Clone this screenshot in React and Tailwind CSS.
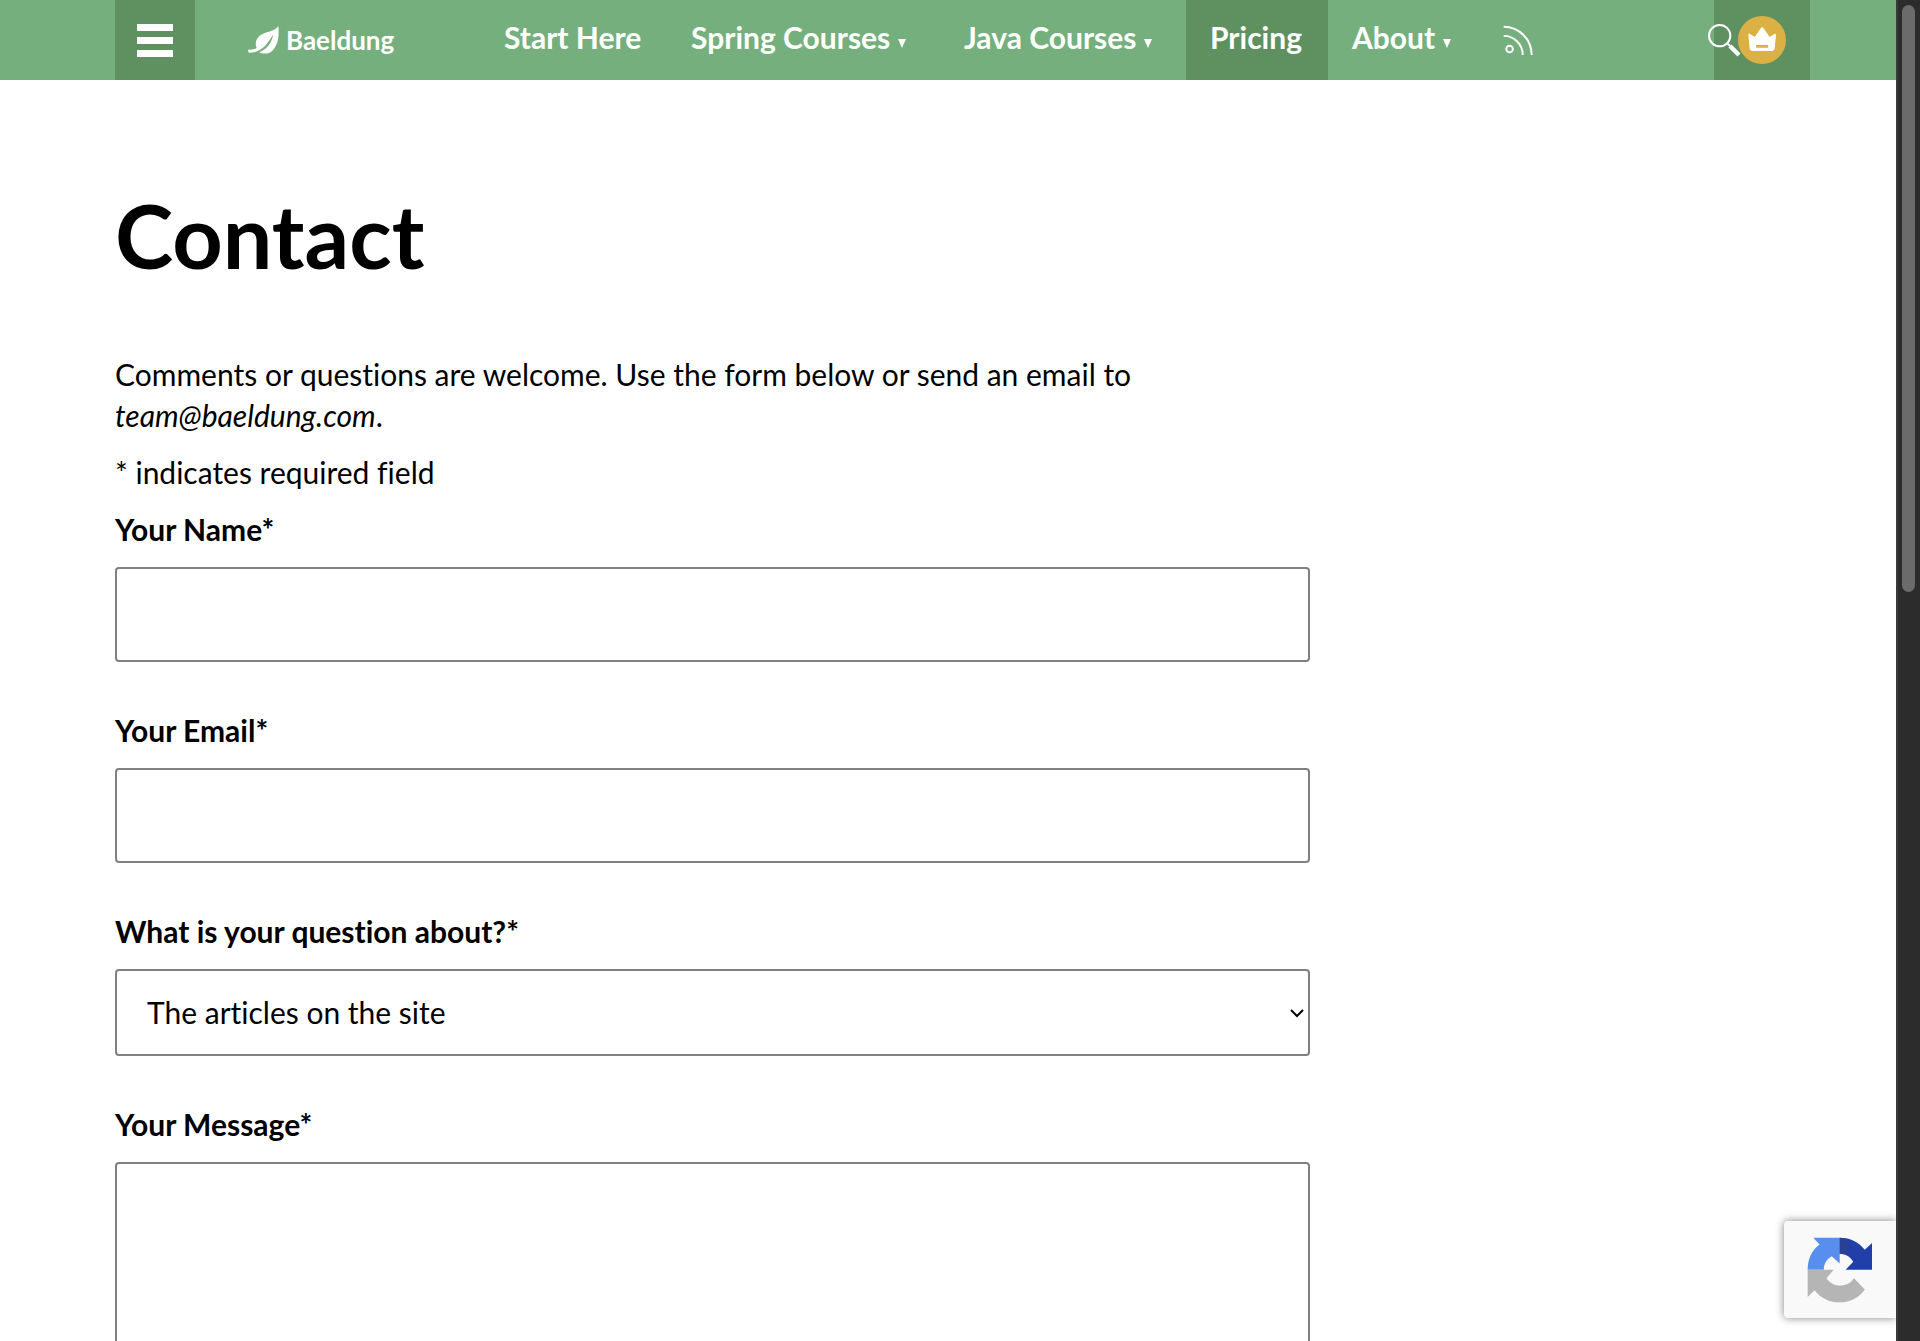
const NAV = [
  { label: "Start Here", width: "w-[187px]" },
  { label: "Spring Courses", width: "w-[273px]", menu: true },
  { label: "Java Courses", width: "w-[246px]", menu: true },
  { label: "Pricing", width: "w-[142px]", active: true },
  { label: "About", width: "w-[151px]", menu: true },
];

const TOPICS = ["The articles on the site", "The courses", "Something else"];

const fieldClass = "block w-full rounded-[4px] border-2 border-[#808080] bg-white px-[30px] text-black";

function Leaf() {
  return (
    <svg viewBox="444 79 94 84" className="h-[28px] w-[31px]" fill="#fff" aria-hidden="true">
      <path d="M536 79C522 96 502 94 485 104C468 114 464 130 470 145C464 149 456 151 446 150Q442 154 447 160C461 160 473 156 483 149C499 139 508 123 521 104C516 127 503 149 478 158C489 163 507 164 517 154C535 137 539 112 536 79Z"/>
    </svg>
  );
}

function Logo() {
  return (
    <a href="#home" className="ml-[53px] flex w-[232px] items-center gap-[7px] text-white">
      <Leaf/>
      <span className="text-[26px] leading-[30px] font-bold">Baeldung</span>
    </a>
  );
}

function RssIcon() {
  return (
    <svg viewBox="1387 74 91 92" className="h-[31px] w-[30px]" fill="none" stroke="#fff" strokeWidth="6" aria-hidden="true">
      <circle cx="1407" cy="146" r="10"/>
      <path d="M1389 106A58 58 0 0 1 1447 164M1389 78A85 86 0 0 1 1474 164"/>
    </svg>
  );
}

function SearchIcon() {
  return (
    <svg viewBox="85 70 99 99" className="h-[33px] w-[33px]" fill="none" stroke="#fff" aria-hidden="true">
      <circle cx="120" cy="105" r="32" strokeWidth="6"/>
      <path d="M142 127L152 137" strokeWidth="6"/>
      <path d="M151 136L178 163" strokeWidth="13"/>
    </svg>
  );
}

function CrownBadge() {
  return (
    <svg viewBox="0 0 144 144" className="h-12 w-12" aria-hidden="true">
      <circle cx="72" cy="72" r="72" fill="#dbb045"/>
      <path d="M35 53Q31 51 31 57L35 97Q36 105 44 105H101Q109 105 110 97L114 57Q114 51 109 54L95 63L76 36Q72 32 69 36L50 63Z" fill="#fff"/>
      <rect x="54" y="87" width="37" height="8" rx="3" fill="#dbb045"/>
    </svg>
  );
}

function Header() {
  return (
    <header className="flex h-20 shrink-0 bg-[#75af7d] pr-[86px] pl-[115px] text-white">
      <button aria-label="Menu" className="flex w-20 flex-col items-center justify-center gap-[6px] bg-[#5f9160]">
        <span className="h-[7px] w-9 bg-white"/>
        <span className="h-[7px] w-9 bg-white"/>
        <span className="h-[7px] w-9 bg-white"/>
      </button>
      <Logo/>
      <nav className="flex flex-1">
        {NAV.map((item) => (
          <a
            key={item.label}
            href="#nav"
            className={`flex shrink-0 gap-2 pt-[17px] pl-6 text-[30px] leading-[41px] font-bold whitespace-nowrap ${item.width} ${item.active ? "bg-[#5f9160]" : ""}`}
          >
            {item.label}
            {item.menu && (
              <svg viewBox="0 0 8 9" className="mt-[22px] h-[9px] w-2" fill="#fff" aria-hidden="true">
                <path d="M0 0H8L4 9Z"/>
              </svg>
            )}
          </a>
        ))}
        <a href="#rss" aria-label="RSS feed" className="flex items-center pl-6">
          <RssIcon/>
        </a>
      </nav>
      <div className="flex w-24 items-center bg-[#5f9160]">
        <button aria-label="Search" className="-ml-[6px] shrink-0">
          <SearchIcon/>
        </button>
        <button aria-label="Membership" className="-ml-[3px] shrink-0">
          <CrownBadge/>
        </button>
      </div>
    </header>
  );
}

function Field({ id, label, children }) {
  return (
    <div className="mb-12">
      <label htmlFor={id} className="mb-[17px] block font-bold">{label}</label>
      {children}
    </div>
  );
}

function RecaptchaBadge() {
  return (
    <div className="absolute right-0 bottom-[23px] flex h-[97px] w-[112px] items-center rounded-l-[4px] bg-[#f9f9f9] pl-[23px] shadow-[0_0_8px_#808080]">
      <svg viewBox="142 113 198 200" className="h-[66px] w-[66px]" aria-hidden="true">
        <path d="M143 212C143 180 156 153 179 136L160 115H240V193L216 171C200 180 192 194 192 212Z" fill="#588fee"/>
        <path d="M240 115C272 115 299 129 316 152L338 131V212H258L281 188C271 172 257 164 240 164Z" fill="#213fa8"/>
        <path d="M240 115L264 119V169Q253 164 240 164Z" fill="#2b4093"/>
        <path d="M143 212H222L200 238C209 252 224 260 240 260C258 260 276 252 283 237L316 272C299 297 272 311 240 311C209 311 182 298 164 274L143 295Z" fill="#b5b5b5"/>
      </svg>
    </div>
  );
}

function Scrollbar() {
  return (
    <div className="w-6 shrink-0 border-l-2 border-[#3a3a3a] bg-[#2c2c2c] pt-[5px] pl-1" aria-hidden="true">
      <div className="h-[587px] w-[13px] rounded-full bg-[#6b6b6b]"/>
    </div>
  );
}

export default function App() {
  return (
    <div className="flex h-screen overflow-hidden bg-white font-['Lato',sans-serif] text-black [font-variant-ligatures:none]">
      <div className="relative flex min-w-0 flex-1 flex-col overflow-hidden">
        <Header/>
        <main className="w-full max-w-[1310px] pt-[105px] pl-[115px] text-[30px] leading-[41px]">
          <h1 className="mb-[69px] text-[88px] leading-[100px] font-bold">Contact</h1>
          <p className="mb-4">
            Comments or questions are welcome. Use the form below or send an email to <em>team@baeldung.com</em>.
          </p>
          <p className="mb-4">* indicates required field</p>
          <form>
            <Field id="name" label="Your Name*">
              <input id="name" type="text" className={`h-[95px] ${fieldClass}`}/>
            </Field>
            <Field id="email" label="Your Email*">
              <input id="email" type="email" className={`h-[95px] ${fieldClass}`}/>
            </Field>
            <Field id="topic" label="What is your question about?*">
              <div className="relative">
                <select id="topic" className={`h-[87px] appearance-none ${fieldClass}`}>
                  {TOPICS.map((t) => <option key={t}>{t}</option>)}
                </select>
                <svg viewBox="0 0 14 9" className="pointer-events-none absolute top-10 right-[6px] h-[9px] w-[14px]" fill="none" stroke="#000" strokeWidth="2" aria-hidden="true">
                  <path d="M1 1L7 7L13 1"/>
                </svg>
              </div>
            </Field>
            <Field id="message" label="Your Message*">
              <textarea id="message" className={`h-[320px] resize-none py-6 ${fieldClass}`}/>
            </Field>
          </form>
        </main>
        <RecaptchaBadge/>
      </div>
      <Scrollbar/>
    </div>
  );
}
